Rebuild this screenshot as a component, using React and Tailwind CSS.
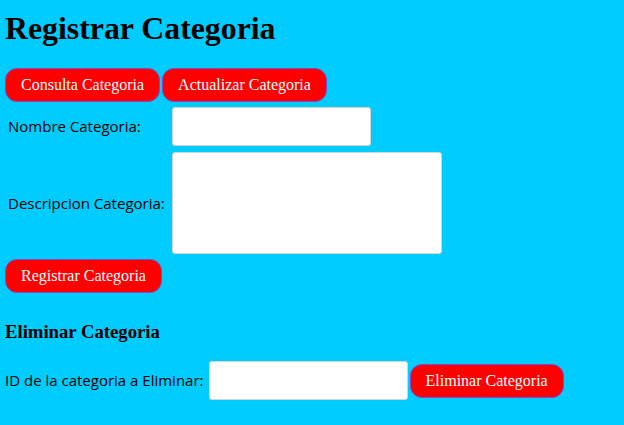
export default function App() {
  const btn =
    "h-[34px] px-[15px] rounded-[12px] bg-[#ff0000] border border-[#7a4ad0] text-white text-[16px] leading-none whitespace-nowrap font-['Liberation_Serif',serif]";
  const field = "bg-white border border-[#d4d4d4] rounded-[3px]";

  return (
    <div className="min-h-[425px] w-[624px] bg-[#00ccff] px-[5px] pt-[11px] font-['Open_Sans',sans-serif] text-[15px] text-black">
      <h1 className="font-['Liberation_Serif',serif] font-bold text-[31.8px] leading-[36px]">
        Registrar Categoria
      </h1>

      <div className="flex gap-[2px] mt-[21px]">
        <button className={`${btn} w-[155px]`}>Consulta Categoria</button>
        <button className={`${btn} w-[165px]`}>Actualizar Categoria</button>
      </div>

      <div className="grid grid-cols-[167px_auto] gap-y-[6px] mt-[5px] items-center">
        <label className="pl-[3px]">Nombre Categoria:</label>
        <input className={`${field} w-[199px] h-[39px]`} />
        <label className="pl-[3px]">Descripcion Categoria:</label>
        <textarea className={`${field} w-[270px] h-[102px] resize-none`} />
      </div>

      <button className={`${btn} w-[157px] mt-[5px]`}>Registrar Categoria</button>

      <h3 className="font-['Liberation_Serif',serif] font-bold text-[18.7px] leading-[22px] mt-[28px]">
        Eliminar Categoria
      </h3>

      <div className="flex items-center mt-[18px]">
        <label className="mr-[5px]">ID de la categoria a Eliminar:</label>
        <input className={`${field} w-[199px] h-[39px]`} />
        <button className={`${btn} w-[154px] ml-[2px]`}>Eliminar Categoria</button>
      </div>
    </div>
  );
}
